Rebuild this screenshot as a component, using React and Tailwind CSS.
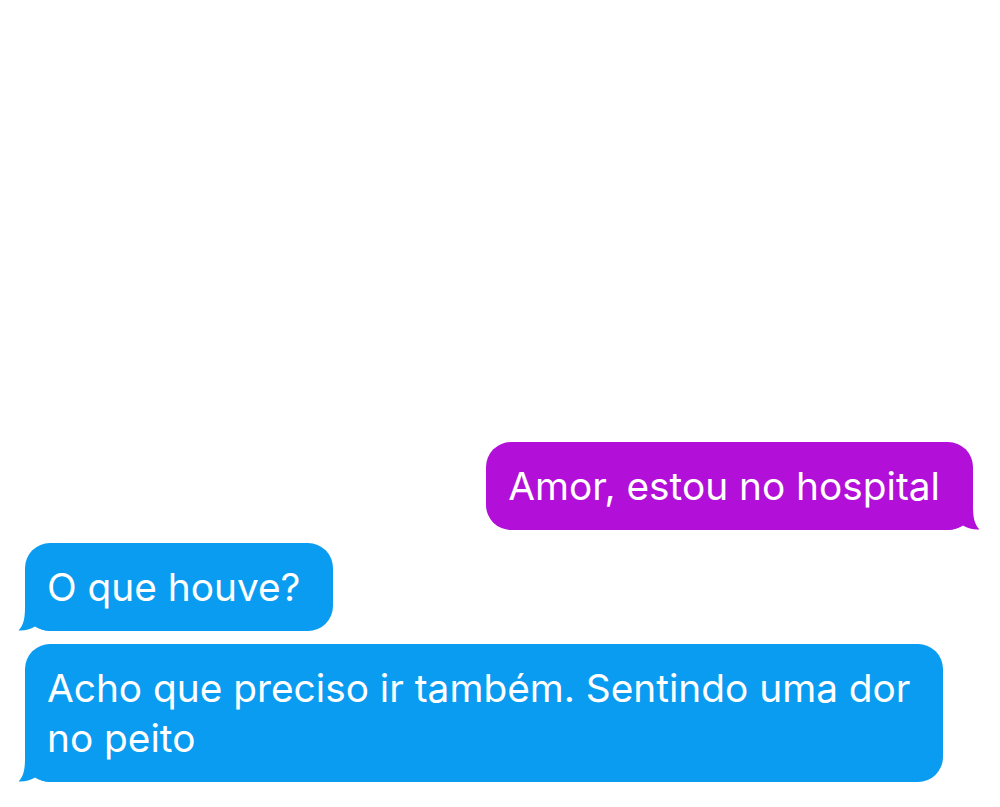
import React from 'react'

function Tail({ color, side }) {
  // little iMessage tail drawn under the bottom corner of a bubble
  const pos = side === 'right' ? '-right-[7px]' : '-left-[7px] -scale-x-100'
  return (
    <svg
      className={`absolute bottom-0 ${pos}`}
      width="35"
      height="24"
      viewBox="0 0 35 24"
    >
      <path
        d="M0 24 L0 0 L28 0 C28 10 29 18 34.5 23.5 C29 24 23 22.5 18 19.5 C13 22.5 7 24 0 24 Z"
        fill={color}
      />
    </svg>
  )
}

function Bubble({ from, children }) {
  const mine = from === 'me'
  const color = mine ? '#b20fd9' : '#0a9cf1'
  return (
    <div className={`flex ${mine ? 'justify-end pr-[27px]' : 'justify-start pl-[25px]'}`}>
      <div
        className={`relative rounded-[25px] pl-[22px] pr-[33px] py-[19px] text-white text-[38.8px] leading-[50px] ${
          mine ? 'bg-[#b20fd9]' : 'bg-[#0a9cf1]'
        }`}
      >
        <Tail color={color} side={mine ? 'right' : 'left'} />
        <p className="relative">{children}</p>
      </div>
    </div>
  )
}

export default function App() {
  return (
    <div className="h-screen w-full bg-white flex flex-col justify-end gap-[13px] pb-[25px] font-['Inter','Liberation_Sans',sans-serif]">
      <Bubble from="me">Amor, estou no hospital</Bubble>
      <Bubble from="them">O que houve?</Bubble>
      <Bubble from="them">
        Acho que preciso ir também. Sentindo uma dor
        <br />
        no peito
      </Bubble>
    </div>
  )
}
